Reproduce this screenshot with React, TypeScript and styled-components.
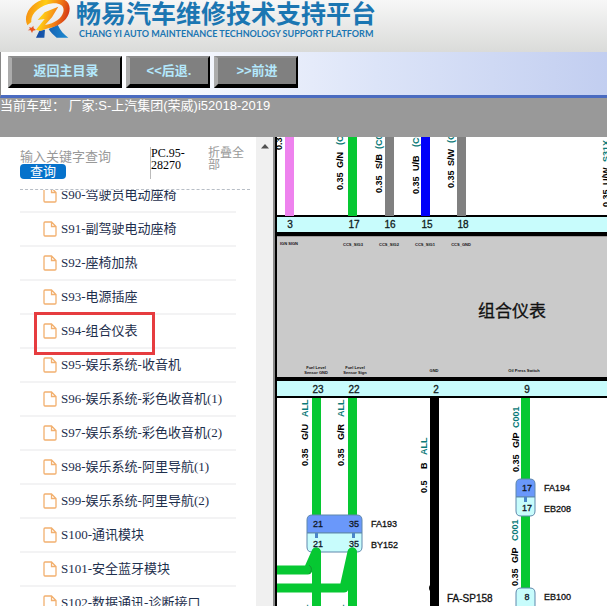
import React from "react";
import styled, { createGlobalStyle } from "styled-components";

const SANS = '"Liberation Sans", "Noto Sans CJK SC", sans-serif';
const SERIF = '"Liberation Serif", "Noto Sans CJK SC", serif';

const GlobalStyle = createGlobalStyle`
  * { box-sizing: border-box; }
  body { margin: 0; background: #fff; font-family: ${SANS}; }
`;

const Page = styled.div`
  height: 100vh;
  display: flex;
  flex-direction: column;
  overflow: hidden;
`;

const Header = styled.header`
  flex: none;
  height: 52px;
  padding-left: 24px;
  display: flex;
  align-items: flex-start;
  gap: 6px;
  background: linear-gradient(#f7f7f7, #dadbd9);
`;

const Brand = styled.div`
  display: flex;
  flex-direction: column;
  color: #1b76b2;
  white-space: nowrap;
`;

const BrandTitle = styled.h1`
  margin: 0;
  font-size: 25px;
  line-height: 28px;
  font-weight: 700;
`;

const BrandSub = styled.p`
  margin: 0;
  padding-left: 3px;
  font-family: Lato, ${SANS};
  font-size: 9px;
  line-height: 12px;
  font-weight: 700;
`;

const Toolbar = styled.nav`
  flex: none;
  height: 46px;
  padding: 4px 8px 0 7px;
  display: flex;
  align-items: flex-start;
  gap: 4px;
  border-left: 1px solid #888;
  border-bottom: 3px solid #4a6bc0;
  background: linear-gradient(90deg, #fff 0%, #fbfcff 25%, #dce4f8 62%, #c2cef0 100%);
`;

const ToolButton = styled.button<{ $wide?: boolean }>`
  width: ${(p) => (p.$wide ? 114 : 84)}px;
  height: 32px;
  padding: 0;
  border-style: solid;
  border-width: 2px 2px 4px 4px;
  border-color: #8c8c8c #000 #000 #acacac;
  background: #808080;
  color: #b4e8fc;
  font: 700 13px/24px ${SANS};
  cursor: pointer;
`;

const InfoBar = styled.div`
  flex: none;
  height: 39px;
  background: #999;
  color: #fff;
  font-size: 13px;
  line-height: 15px;
  white-space: pre;
`;

const Main = styled.main`
  flex: 1;
  min-height: 0;
  display: flex;
`;

const Sidebar = styled.aside`
  flex: none;
  width: 256px;
  padding: 10px 6px 0 20px;
  display: flex;
  flex-direction: column;
  font-family: ${SERIF};
  overflow: hidden;
`;

const SearchBar = styled.form`
  flex: none;
  height: 43px;
  display: flex;
  align-items: flex-start;
  border-bottom: 1px dashed #b8bec6;
`;

const SearchField = styled.div`
  width: 130px;
  display: flex;
  flex-direction: column;
  align-items: flex-start;
`;

const SearchInput = styled.input`
  width: 100%;
  height: 17px;
  padding: 2px 0 0;
  border: 0;
  outline: 0;
  background: none;
  font: 13px/15px ${SERIF};
  &::placeholder { color: #999; opacity: 1; }
`;

const SearchButton = styled.button`
  width: 46px;
  height: 15px;
  padding: 0;
  border: 0;
  border-radius: 4px;
  background: #0672cb;
  color: #fff;
  font: 13px/15px ${SERIF};
`;

const SearchCode = styled.div`
  width: 58px;
  height: 32px;
  border-left: 1px solid #bbb;
  font-size: 12px;
  line-height: 12px;
`;

const FoldLink = styled.a`
  width: 38px;
  color: #999;
  font-size: 12px;
  line-height: 12px;
  text-decoration: none;
`;

const ListView = styled.div`
  flex: 1;
  min-height: 0;
  overflow: hidden;
`;

const List = styled.ul`
  list-style: none;
  margin: -11px 14px 0 0;
  padding: 0;
`;

const ListItem = styled.li`
  position: relative;
  height: 34px;
  border-bottom: 2px solid #f3f3f4;
`;

const ItemLink = styled.a`
  height: 32px;
  padding-left: 23px;
  display: flex;
  align-items: center;
  gap: 4px;
  color: #1e2f4d;
  font-size: 13px;
  line-height: 20px;
  text-decoration: none;
  white-space: nowrap;
`;

const Marker = styled.span`
  position: absolute;
  left: 14px;
  top: -3px;
  width: 121px;
  height: 43px;
  border: 3px solid #e63c3f;
  z-index: 1;
  pointer-events: none;
`;

const ScrollTrack = styled.div`
  flex: none;
  width: 17px;
  padding-top: 7px;
  display: flex;
  justify-content: center;
  align-items: flex-start;
  background: #f0f0f0;
`;

const Splitter = styled.div`
  flex: none;
  width: 2px;
  background: #8a8a8a;
`;

const Diagram = styled.section`
  flex: 1;
  min-width: 0;
  border-left: 2px solid #000;
  background: #fff;
  overflow: hidden;
`;

const Canvas = styled.svg`
  display: block;
  width: 100%;
  height: 100%;
  font-family: ${SANS};
  .num { font-size: 10px; text-anchor: middle; fill: #102020; stroke: #102020; stroke-width: 0.3px; }
  .pin { font-size: 9px; text-anchor: middle; fill: #101828; stroke: #101828; stroke-width: 0.3px; }
  .tag { font-size: 9px; fill: #111; stroke: #111; stroke-width: 0.3px; }
  .tiny { font-size: 4px; font-weight: 700; text-anchor: middle; fill: #111; }
  .vert { font-size: 9px; font-weight: 700; }
`;

const Logo = () => (
  <svg width="46" height="38" viewBox="0 0 138 114" aria-hidden="true">
    <defs>
      <linearGradient id="flame" x1="0" y1="0.3" x2="1" y2="0.5">
        <stop offset="0" stopColor="#f58a12" />
        <stop offset="0.4" stopColor="#ffce14" />
        <stop offset="0.7" stopColor="#f58216" />
        <stop offset="1" stopColor="#cf2f16" />
      </linearGradient>
      <linearGradient id="leg" x1="0" y1="0" x2="1" y2="0">
        <stop offset="0" stopColor="#1649a0" />
        <stop offset="1" stopColor="#1a8bd2" />
      </linearGradient>
    </defs>
    <path fill="url(#leg)" d="M46 92 63 89 61 113H36ZM74 87 101 74C109 91 119 103 133 113H98C88 105 79 96 74 87Z" />
    <path
      fill="url(#flame)"
      fillRule="evenodd"
      d="M10 76C-4 48 18 8 63 -3H112C134 0 142 20 134 42C126 63 105 79 72 85L49 93L36 89L62 57L41 60L62 37L103 20L84 52L63 75C93 70 113 55 118 36C122 18 109 9 87 10C47 14 19 43 22 66Z"
    />
    <path fill="#e8531f" d="M15 82 23 83 28 77 29 85 36 90 27 92 24 99 20 91 11 91 18 87Z" />
  </svg>
);

const FileIcon = () => (
  <svg width="14" height="16" viewBox="0 0 14 16" fill="none" stroke="#f2b06f" strokeWidth="1.3" aria-hidden="true">
    <path d="M1 2Q1 1 2 1H8.5L13 5.5V14Q13 15 12 15H2Q1 15 1 14ZM8.5 1V5.5H13" />
  </svg>
);

const items = [
  "S90-驾驶员电动座椅",
  "S91-副驾驶电动座椅",
  "S92-座椅加热",
  "S93-电源插座",
  "S94-组合仪表",
  "S95-娱乐系统-收音机",
  "S96-娱乐系统-彩色收音机(1)",
  "S97-娱乐系统-彩色收音机(2)",
  "S98-娱乐系统-阿里导航(1)",
  "S99-娱乐系统-阿里导航(2)",
  "S100-通讯模块",
  "S101-安全蓝牙模块",
  "S102-数据通讯-诊断接口",
];
const current = "S94-组合仪表";

const GREEN = "#06c832";
const TEAL = "#0b7a78";

type Label = [x: number, y: number, text: string, color?: string];

const verticalLabels: Label[] = [
  [5, 13, "0.35"],
  [66, 53, "0.35"], [66, 31, "G/N"], [66, 8, "(C001)", TEAL],
  [105, 56, "0.35"], [105, 32, "S/B"], [105, 12, "(C001)", TEAL],
  [142, 57, "0.35"], [142, 34, "U/B"], [142, 10, "(C001)", TEAL],
  [177, 51, "0.35"], [177, 29, "S/W"], [177, 6, "(C001)", TEAL],
  [332, 70, "0.35"], [332, 48, "U/W"], [332, 25, "S31X", TEAL],
  [31, 329, "0.35"], [31, 303, "G/U"], [31, 280, "ALL", TEAL],
  [67, 329, "0.35"], [67, 303, "G/R"], [67, 280, "ALL", TEAL],
  [150, 356, "0.5"], [150, 332, "B"], [150, 318, "ALL", TEAL],
  [242, 335, "0.35"], [242, 311, "G/P"], [242, 291, "C001", TEAL],
  [241, 449, "0.35"], [241, 426, "G/P"], [241, 404, "C001", TEAL],
  [31, 485, "ALL", TEAL], [67, 485, "ALL", TEAL],
];

const terminals: Label[] = [
  [13, 91, "3"], [77, 91, "17"], [113, 91, "16"], [150, 91, "15"], [186, 91, "18"],
  [41, 256, "23"], [77, 256, "22"], [159, 256, "2"], [250, 256, "9"],
];

const signals: Label[] = [
  [12, 108, "IGN SIGN"], [76, 109, "CCS_SIG3"], [112, 109, "CCS_SIG2"],
  [148, 109, "CCS_SIG1"], [184, 109, "CCS_GND"],
  [39, 232, "Fuel Level"], [39, 237, "Sensor GND"],
  [78, 232, "Fuel Level"], [78, 237, "Sensor Sign"],
  [157, 235, "GND"], [247, 235, "Oil Press Switch"],
];

const wires: [x: number, y: number, width: number, height: number, color: string][] = [
  [8, 0, 9, 79, "#ee82ee"], [71, 0, 9, 79, GREEN], [108, 0, 9, 79, "#808080"],
  [144, 0, 9, 79, "#0000fa"], [180, 0, 9, 79, "#808080"],
  [35, 261, 9, 118, GREEN], [71, 261, 9, 118, GREEN],
  [153, 261, 9, 500, "#000"], [244, 261, 9, 82, GREEN], [244, 378, 9, 74, GREEN],
];

const pins: Label[] = [
  [41, 390, "21"], [77, 390, "35"], [41, 410, "21"], [77, 410, "35"],
  [250, 354, "17"], [250, 374, "17"], [250, 463, "8"],
];

const tags: Label[] = [
  [94, 390, "FA193"], [94, 411, "BY152"], [267, 354, "FA194"], [267, 375, "EB208"], [267, 463, "EB100"],
];

const Connector = ({ x, y, width }: { x: number; y: number; width: number }) => (
  <g stroke="#5f88ac" strokeWidth="1">
    <path fill="#6a98fa" d={`M${x} ${y + 18}v-13q0 -5 5 -5h${width - 10}q5 0 5 5v13z`} />
    <path fill="#c8fcfc" d={`M${x} ${y + 18}v14q0 5 5 5h${width - 10}q5 0 5 -5v-14z`} />
  </g>
);

const WiringDiagram = () => (
  <Canvas role="img" aria-label="组合仪表">
    <rect y="78" width="100%" height="21" fill="#000" />
    <rect y="80" width="100%" height="15" fill="#c8fcfc" />
    <rect y="99" width="100%" height="141" fill="#cacaca" />
    <rect y="99" width="100%" height="1" fill="#a09c9c" />
    <rect y="240" width="100%" height="21" fill="#000" />
    <rect y="244" width="100%" height="15" fill="#c8fcfc" />

    {wires.map(([x, y, w, h, color]) => (
      <rect key={`${x}-${y}`} x={x} y={y} width={w} height={h} fill={color} />
    ))}

    <Connector x={30} y={378} width={55} />
    <Connector x={239} y={342} width={19} />
    <path d="M239 500V456q0-5 5-5h9q5 0 5 5V500z" fill="#c8fcfc" stroke="#5f88ac" />
    <path d="M38 396h3v5h-3zM75 396h3v5h-3zM247 360h3v5h-3z" fill="#4a86c8" />

    <g stroke={GREEN} strokeWidth="9" fill="none" strokeLinecap="round" strokeLinejoin="round">
      <path d="M39.5 415V700M75.5 415V700" />
      <path d="M39 415 31 433H-8" />
      <path d="M75 415 67 451H-8" />
    </g>
    <path d="M32 428q5 4 0 9" fill="none" stroke="#139334" />
    <circle cx="157" cy="451" r="5" fill="#000" />

    {terminals.map(([x, y, t]) => <text key={t} className="num" x={x} y={y}>{t}</text>)}
    {signals.map(([x, y, t]) => <text key={`${x}-${y}`} className="tiny" x={x} y={y}>{t}</text>)}
    {pins.map(([x, y, t]) => <text key={`${x}-${y}`} className="pin" x={x} y={y}>{t}</text>)}
    {tags.map(([x, y, t]) => <text key={t} className="tag" x={x} y={y}>{t}</text>)}
    {verticalLabels.map(([x, y, t, color]) => (
      <text key={`${x}-${y}`} className="vert" fill={color ?? "#000"} transform={`translate(${x} ${y}) rotate(-90)`}>
        {t}
      </text>
    ))}
    <text x="170" y="465" fontSize="10" fill="#111" stroke="#111" strokeWidth="0.3">FA-SP158</text>
    <text x="201" y="180" fontSize="17" fill="#111" stroke="#111" strokeWidth="0.3">组合仪表</text>
  </Canvas>
);

export default function App() {
  return (
    <Page>
      <GlobalStyle />
      <Header>
        <Logo />
        <Brand>
          <BrandTitle>畅易汽车维修技术支持平台</BrandTitle>
          <BrandSub>CHANG YI AUTO MAINTENANCE TECHNOLOGY SUPPORT PLATFORM</BrandSub>
        </Brand>
      </Header>
      <Toolbar>
        <ToolButton type="button" $wide>返回主目录</ToolButton>
        <ToolButton type="button">&lt;&lt;后退.</ToolButton>
        <ToolButton type="button">&gt;&gt;前进</ToolButton>
      </Toolbar>
      <InfoBar>当前车型： 厂家:S-上汽集团(荣威)i52018-2019</InfoBar>
      <Main>
        <Sidebar>
          <SearchBar onSubmit={(e) => e.preventDefault()}>
            <SearchField>
              <SearchInput type="text" aria-label="输入关键字查询" placeholder="输入关键字查询" />
              <SearchButton type="submit">查询</SearchButton>
            </SearchField>
            <SearchCode>PC.95-28270</SearchCode>
            <FoldLink href="#fold">折叠全部</FoldLink>
          </SearchBar>
          <ListView>
            <List>
              {items.map((name) => (
                <ListItem key={name}>
                  <ItemLink href={`#${name.split("-")[0]}`}>
                    <FileIcon />
                    {name}
                  </ItemLink>
                  {name === current && <Marker />}
                </ListItem>
              ))}
            </List>
          </ListView>
        </Sidebar>
        <ScrollTrack>
          <svg width="8" height="5" viewBox="0 0 8 5" aria-hidden="true">
            <path d="M4 0 8 4.5H0Z" fill="#505050" />
          </svg>
        </ScrollTrack>
        <Splitter />
        <Diagram>
          <WiringDiagram />
        </Diagram>
      </Main>
    </Page>
  );
}
